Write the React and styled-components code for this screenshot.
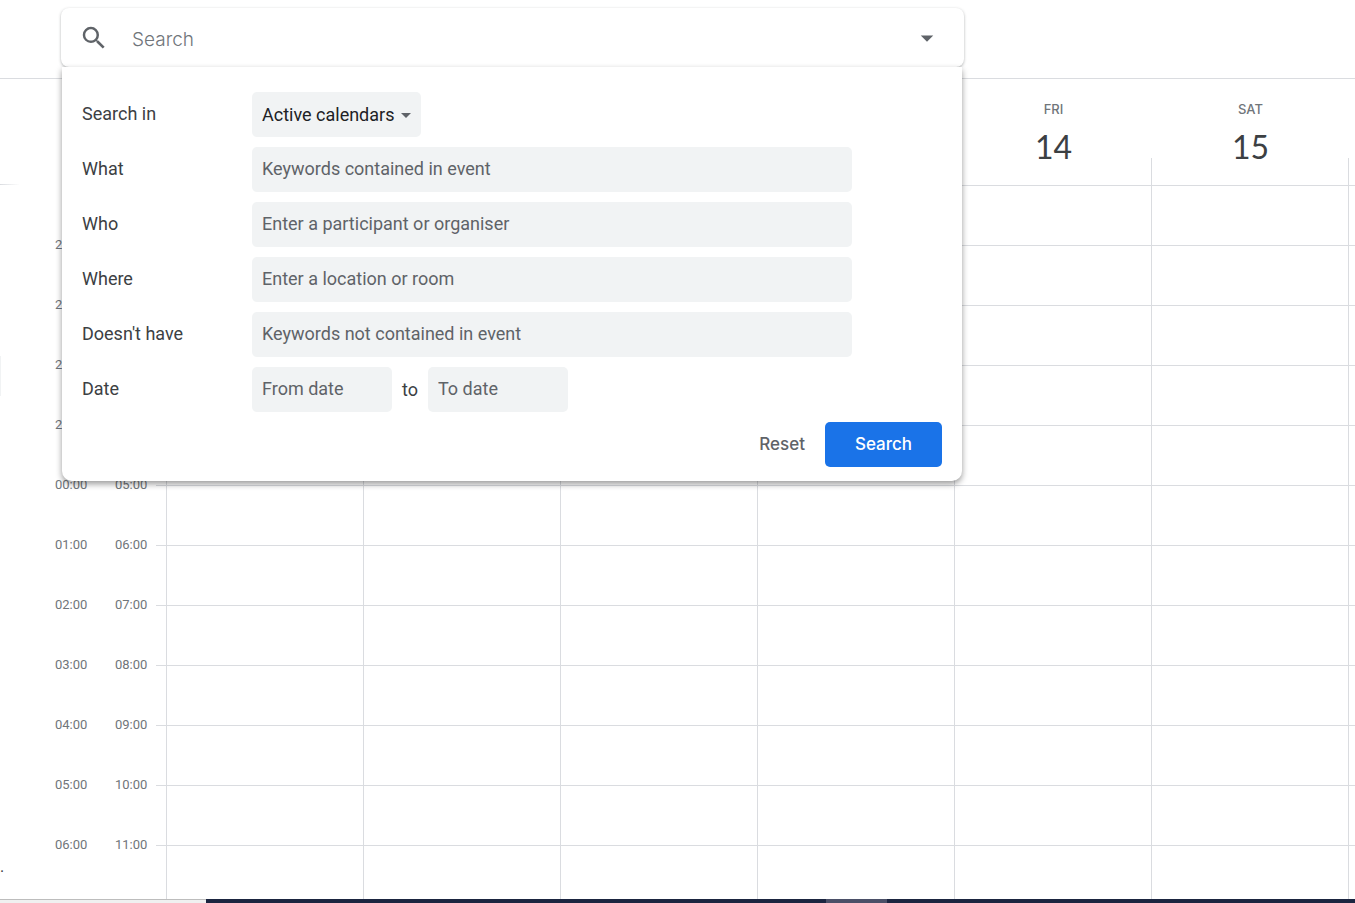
import styled, { createGlobalStyle } from 'styled-components';
import { MdArrowDropDown, MdSearch } from 'react-icons/md';

const days = [
  { name: 'MON', date: 10 },
  { name: 'TUE', date: 11 },
  { name: 'WED', date: 12 },
  { name: 'THU', date: 13 },
  { name: 'FRI', date: 14 },
  { name: 'SAT', date: 15 },
];

const hours = [
  ['', ''],
  ['20:00', '01:00'],
  ['21:00', '02:00'],
  ['22:00', '03:00'],
  ['23:00', '04:00'],
  ['00:00', '05:00'],
  ['01:00', '06:00'],
  ['02:00', '07:00'],
  ['03:00', '08:00'],
  ['04:00', '09:00'],
  ['05:00', '10:00'],
  ['06:00', '11:00'],
];

const fields = [
  { id: 'what', label: 'What', placeholder: 'Keywords contained in event' },
  { id: 'who', label: 'Who', placeholder: 'Enter a participant or organiser' },
  { id: 'where', label: 'Where', placeholder: 'Enter a location or room' },
  { id: 'without', label: "Doesn't have", placeholder: 'Keywords not contained in event' },
];

function SearchPanel() {
  return (
    <Panel onSubmit={(e) => e.preventDefault()}>
      <Row>
        <Label htmlFor="scope">Search in</Label>
        <SelectBox>
          <Select id="scope">
            <option>Active calendars</option>
          </Select>
          <MdArrowDropDown size={24} />
        </SelectBox>
      </Row>
      {fields.map(({ id, label, placeholder }) => (
        <Row key={id}>
          <Label htmlFor={id}>{label}</Label>
          <Field id={id} type="text" placeholder={placeholder} />
        </Row>
      ))}
      <Row>
        <Label htmlFor="from">Date</Label>
        <DateRange>
          <Field $short id="from" type="text" placeholder="From date" />
          <label htmlFor="to">to</label>
          <Field $short id="to" type="text" placeholder="To date" />
        </DateRange>
      </Row>
      <Actions>
        <Button type="reset">Reset</Button>
        <Button $primary type="submit">
          Search
        </Button>
      </Actions>
    </Panel>
  );
}

function Week() {
  return (
    <StyledWeek>
      <WeekHead>
        {days.map(({ name, date }) => (
          <DayHead key={name}>
            <DayName>{name}</DayName>
            <DayDate>{date}</DayDate>
          </DayHead>
        ))}
        <Gutter />
      </WeekHead>
      <AllDay>
        {days.map(({ name }) => (
          <Cell key={name} />
        ))}
        <Gutter $line />
      </AllDay>
      {hours.map(([home, local]) => (
        <HourRow key={local}>
          <Time>{home}</Time>
          <Time $last>{local}</Time>
          <Slots>
            {days.map(({ name }) => (
              <Cell key={name} />
            ))}
            <Gutter $line />
          </Slots>
        </HourRow>
      ))}
    </StyledWeek>
  );
}

function App() {
  return (
    <Page>
      <GlobalStyle />
      <Header>
        <SearchArea>
          <SearchBar>
            <MdSearch size={30} />
            <SearchInput type="text" placeholder="Search" aria-label="Search" />
            <IconButton type="button" aria-label="Search options">
              <MdArrowDropDown size={30} />
            </IconButton>
          </SearchBar>
          <SearchPanel />
        </SearchArea>
      </Header>
      <Main>
        <Sidebar>
          <Divider />
          <Chip />
          <Ellipsis>.</Ellipsis>
        </Sidebar>
        <Week />
      </Main>
      <Footer>
        <StatusBar />
        <TaskBar>
          <ActiveTask />
        </TaskBar>
      </Footer>
    </Page>
  );
}
export default App;

const line = '#dadce0';
const grey = '#5f6368';

const GlobalStyle = createGlobalStyle`
  * {
    box-sizing: border-box;
  }
  body {
    margin: 0;
    background: #fff;
    color: #3c4043;
    font-family: Roboto, sans-serif;
  }
  input, select, button {
    font: inherit;
    border: 0;
    outline: 0;
  }
`;

const Page = styled.div`
  display: flex;
  flex-direction: column;
  height: 100vh;
  overflow: hidden;
`;

const Header = styled.header`
  flex: none;
  padding: 8px 61px 11px;
  border-bottom: 1px solid ${line};
`;

const SearchArea = styled.div`
  position: relative;
  z-index: 2;
  width: 100%;
  max-width: 903px;
`;

const SearchBar = styled.div`
  display: flex;
  align-items: center;
  height: 59px;
  padding: 0 22px 0 18px;
  border-radius: 8px;
  background: #fff;
  box-shadow: 0 1px 3px rgba(60, 64, 67, 0.4);
  color: ${grey};
`;

const SearchInput = styled.input`
  flex: 1;
  min-width: 0;
  height: 48px;
  margin-left: 23px;
  padding: 4px 0 0;
  background: none;
  font-family: Inter, sans-serif;
  font-size: 19px;
  font-weight: 300;
  &::placeholder {
    color: #70757a;
    opacity: 1;
  }
`;

const IconButton = styled.button`
  display: flex;
  padding: 0;
  background: none;
  color: ${grey};
`;

const Panel = styled.form`
  position: absolute;
  top: 100%;
  left: 1px;
  right: 2px;
  display: flex;
  flex-direction: column;
  gap: 10px;
  padding: 25px 20px 14px;
  border-radius: 0 0 10px 10px;
  background: #fff;
  box-shadow: 0 3px 6px rgba(0, 0, 0, 0.4);
  font-size: 18px;
`;

const Row = styled.div`
  display: flex;
  align-items: center;
  height: 45px;
`;

const Label = styled.label`
  flex: none;
  width: 170px;
  padding-bottom: 2px;
`;

const Field = styled.input`
  width: ${({ $short }) => ($short ? '140px' : '600px')};
  min-width: 0;
  height: 45px;
  padding: 0 10px 2px;
  border-radius: 5px;
  background: #f1f3f4;
  &::placeholder {
    color: ${grey};
    opacity: 1;
  }
`;

const SelectBox = styled.div`
  display: grid;
  align-items: center;
  width: 169px;
  color: ${grey};
  > * {
    grid-area: 1 / 1;
  }
  svg {
    justify-self: end;
    margin-right: 3px;
    pointer-events: none;
  }
`;

const Select = styled.select`
  width: 100%;
  height: 45px;
  padding: 0 10px;
  border-radius: 5px;
  background: #f1f3f4;
  color: #202124;
  appearance: none;
`;

const DateRange = styled.div`
  display: flex;
  align-items: center;
  gap: 10px;
`;

const Actions = styled.div`
  display: flex;
  justify-content: flex-end;
  gap: 20px;
`;

const Button = styled.button`
  height: 45px;
  padding: ${({ $primary }) => ($primary ? '0 30px 2px' : '0 0 2px')};
  border-radius: 5px;
  background: ${({ $primary }) => ($primary ? '#1a73e8' : 'none')};
  color: ${({ $primary }) => ($primary ? '#fff' : grey)};
  font-family: Inter, sans-serif;
  font-size: 17px;
  font-weight: 500;
`;

const Main = styled.main`
  display: flex;
  flex: 1;
  min-height: 0;
  overflow: hidden;
`;

const Sidebar = styled.aside`
  display: flex;
  flex-direction: column;
  flex: none;
  width: 55px;
`;

const Divider = styled.div`
  width: 20px;
  height: 1px;
  margin-top: 105px;
  background: linear-gradient(to right, ${line}, #fff);
`;

const Chip = styled.div`
  width: 1px;
  height: 40px;
  margin-top: 171px;
  background: #f1f3f4;
`;

const Ellipsis = styled.span`
  margin-top: auto;
  padding-bottom: 24px;
  font-size: 16px;
  line-height: 16px;
`;

const StyledWeek = styled.section`
  flex: 1;
  min-width: 0;
`;

const WeekHead = styled.div`
  display: flex;
  height: 79px;
  padding-left: 111px;
`;

const DayHead = styled.div`
  flex: 1;
  padding: 22px 0 0 2px;
  text-align: center;
`;

const DayName = styled.div`
  color: #70757a;
  font-family: Inter, sans-serif;
  font-size: 13px;
  font-weight: 500;
  line-height: 16px;
`;

const DayDate = styled.div`
  margin-top: 10px;
  font-family: Lato, sans-serif;
  font-size: 32px;
  line-height: 40px;
`;

const AllDay = styled.div`
  display: flex;
  height: 27px;
  padding-left: 111px;
`;

const Cell = styled.div`
  flex: 1;
  border-left: 1px solid ${line};
`;

const Gutter = styled.div`
  width: 7px;
  border-left: ${({ $line }) => ($line ? `1px solid ${line}` : 'none')};
`;

const HourRow = styled.div`
  display: flex;
  height: 60px;
`;

const Time = styled.span`
  flex: none;
  width: ${({ $last }) => ($last ? '41px' : '60px')};
  margin-top: -8px;
  color: #70757a;
  font-size: 13px;
  line-height: 16px;
`;

const Slots = styled.div`
  display: flex;
  flex: 1;
  padding-left: 10px;
  border-top: 1px solid ${line};
`;

const Footer = styled.footer`
  display: flex;
  flex: none;
  height: 4px;
`;

const StatusBar = styled.div`
  width: 206px;
  border-top: 1px solid #bdbdbd;
  background: #f0f0f0;
`;

const TaskBar = styled.div`
  flex: 1;
  padding-left: 620px;
  background: #1b2540;
`;

const ActiveTask = styled.div`
  width: 61px;
  height: 4px;
  background: #4b5068;
`;
